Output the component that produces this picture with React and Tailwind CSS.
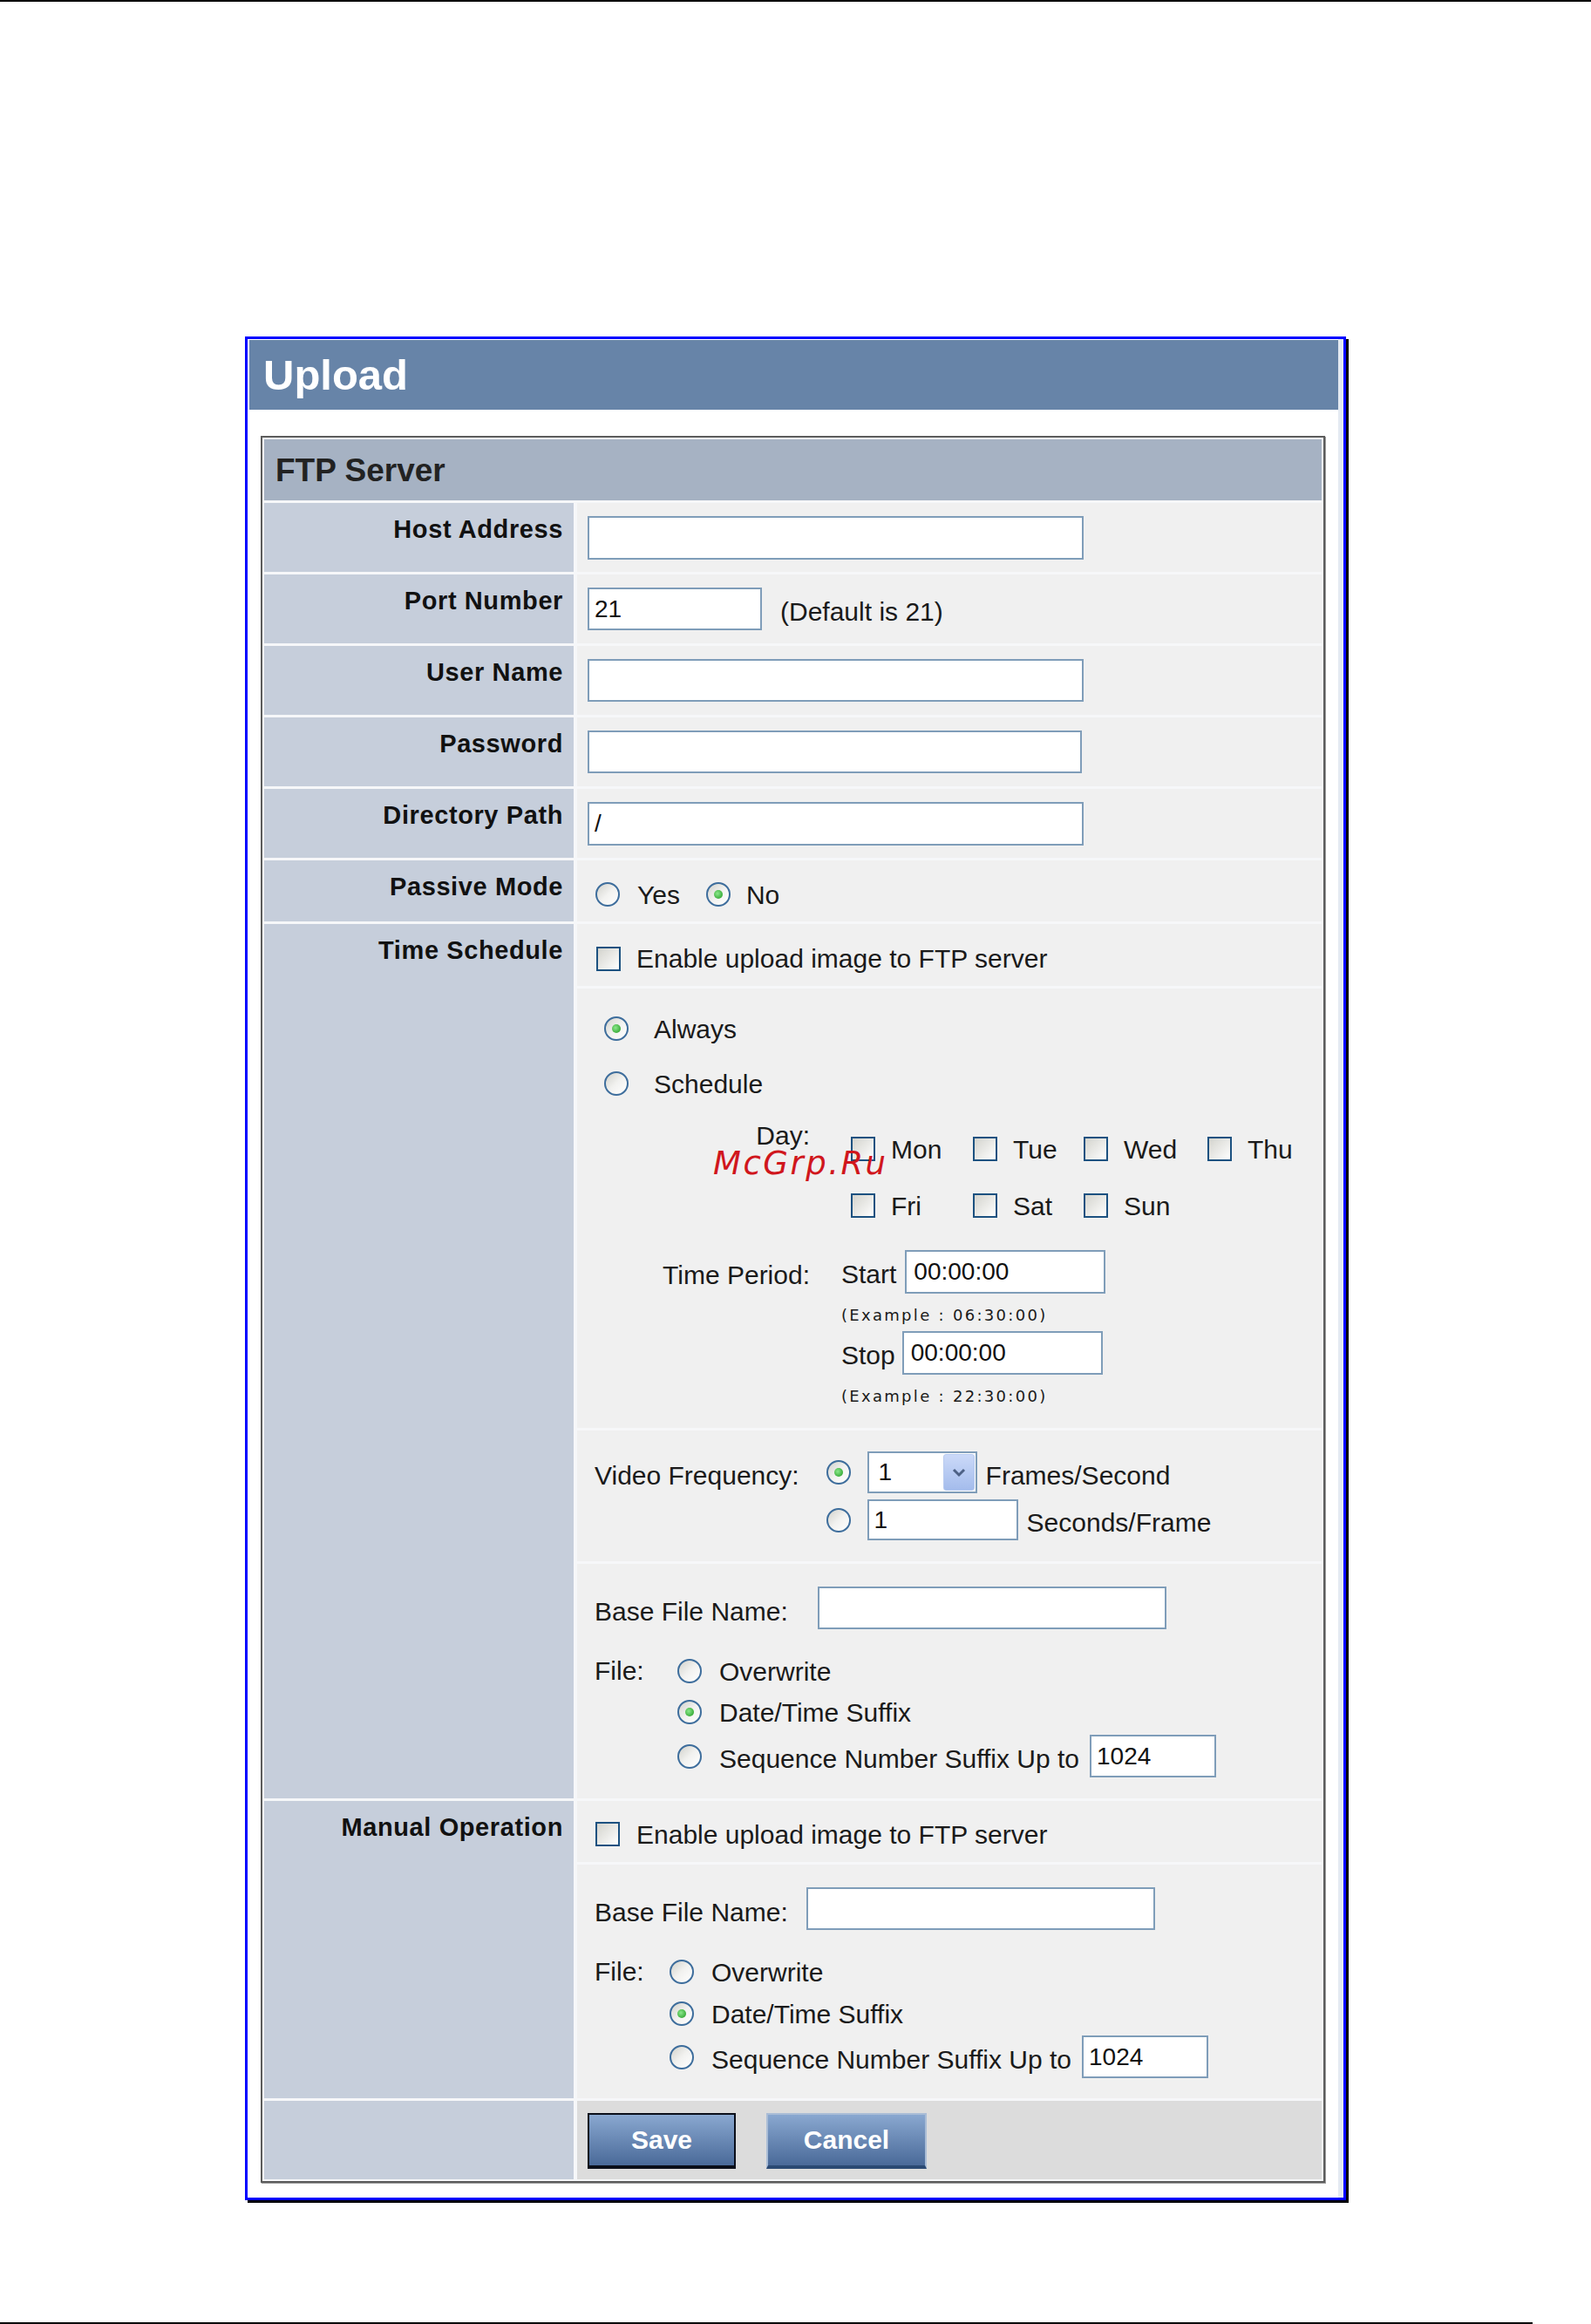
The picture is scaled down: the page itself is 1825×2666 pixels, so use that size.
import React from "react";

function Radio({ checked, className = "" }) {
  return (
    <span className={"inline-flex w-[28px] h-[28px] shrink-0 items-center justify-center rounded-full border-2 border-[#3d6d9c] bg-linear-to-br from-[#d2d2cc] via-[#f2f2f0] to-white " + className}>
      {checked && (
        <span className="w-[10px] h-[10px] rounded-full bg-[radial-gradient(circle_at_40%_40%,#8be88b,#1c961c)]" />
      )}
    </span>
  );
}

function Check() {
  return (
    <span className="inline-block w-[28px] h-[28px] shrink-0 border-2 border-[#1c5180] bg-linear-to-br from-[#d4d4ce] to-white" />
  );
}

function Field({ className, children }) {
  return (
    <div
      className={
        "border-2 border-[#7f9db9] bg-white text-[28px] leading-none text-[#111] flex items-center pl-[6px] " +
        className
      }
    >
      {children}
    </div>
  );
}

function Label({ children }) {
  return (
    <div className="bg-[#c6cedb] text-right pr-[12px] pt-[13px] text-[29px] font-bold tracking-[0.6px] leading-[34px] text-[#111]">
      {children}
    </div>
  );
}

function SimpleRow({ label, children, tall }) {
  return (
    <div className={"grid grid-cols-[355px_854px] gap-x-[4px] " + (tall ? "h-[79px]" : "h-[70px]")}>
      <Label>{label}</Label>
      <div className="bg-[#f0f0f0] pl-[12px] flex items-center">{children}</div>
    </div>
  );
}

function Example({ children }) {
  return (
    <div className="font-['DejaVu_Sans',sans-serif] text-[18px] tracking-[2.3px] leading-[24px] text-[#1a1a1a]">
      {children}
    </div>
  );
}

function DayCell({ label, className }) {
  return (
    <div className={"flex items-center h-[40px] " + className}>
      <Check />
      <span className="ml-[18px]">{label}</span>
    </div>
  );
}

export default function App() {
  return (
    <div className="relative h-[2666px] w-[1825px] bg-white flex flex-col font-['Liberation_Sans',Arial,sans-serif] text-[30px] text-[#1a1a1a]">
      <div className="h-[2px] w-full bg-black" />

      <div className="mt-[384px] ml-[281px] w-[1263px] border-[3px] border-[#0000ff] shadow-[3px_3px_0_#000] bg-white flex">
        <div className="flex flex-col pt-[1px] pl-[2px] pb-[17px] w-[1251px]">
          <div className="h-[80px] w-[1249px] bg-[#6784a8] flex items-center pl-[16px]">
            <span className="text-white font-bold text-[49px] leading-none">Upload</span>
          </div>

          <div className="mt-[30px] ml-[13px] w-[1221px] border-2 border-[#5c5c5c] shadow-[1px_1px_0_#9a9a9a] bg-[#f6f7f9] p-[2px] flex flex-col gap-[3px]">
            <div className="h-[70px] bg-[#a6b2c3] flex items-center pl-[13px]">
              <span className="font-bold text-[37px] text-[#222] leading-none">FTP Server</span>
            </div>

            <SimpleRow label="Host Address" tall>
              <Field className="w-[569px] h-[50px]" />
            </SimpleRow>
            <SimpleRow label="Port Number" tall>
              <Field className="w-[200px] h-[49px]">21</Field>
              <span className="ml-[21px] mt-[6px]">(Default is 21)</span>
            </SimpleRow>
            <SimpleRow label="User Name" tall>
              <Field className="w-[569px] h-[49px]" />
            </SimpleRow>
            <SimpleRow label="Password" tall>
              <Field className="w-[567px] h-[49px]" />
            </SimpleRow>
            <SimpleRow label="Directory Path" tall>
              <Field className="w-[569px] h-[50px]">/</Field>
            </SimpleRow>

            <div className="grid grid-cols-[355px_854px] gap-x-[4px] h-[70px]">
              <Label>Passive Mode</Label>
              <div className="bg-[#f0f0f0] pl-[21px] pt-[8px] flex items-center">
                <Radio />
                <span className="ml-[20px]">Yes</span>
                <Radio checked className="ml-[30px]" />
                <span className="ml-[18px]">No</span>
              </div>
            </div>

            {/* Time Schedule */}
            <div className="grid grid-cols-[355px_854px] gap-x-[4px]">
              <Label>Time Schedule</Label>
              <div className="flex flex-col gap-[3px]">
                <div className="h-[71px] bg-[#f0f0f0] pl-[22px] pt-[8px] flex items-center">
                  <Check />
                  <span className="ml-[18px]">Enable upload image to FTP server</span>
                </div>

                <div className="h-[504px] bg-[#f0f0f0] flex flex-col">
                  <div className="mt-[29px] h-[34px] pl-[31px] flex items-center">
                    <Radio checked />
                    <span className="ml-[29px]">Always</span>
                  </div>
                  <div className="mt-[29px] h-[34px] pl-[31px] flex items-center">
                    <Radio />
                    <span className="ml-[29px]">Schedule</span>
                  </div>

                  <div className="mt-[26px] flex items-start">
                    <div className="w-[267px] text-right leading-[34px]">Day:</div>
                    <div className="ml-[47px] pt-[12px] flex flex-col gap-[25px]">
                      <div className="flex">
                        <DayCell label="Mon" className="w-[140px]" />
                        <DayCell label="Tue" className="w-[127px]" />
                        <DayCell label="Wed" className="w-[142px]" />
                        <DayCell label="Thu" className="w-[120px]" />
                      </div>
                      <div className="flex">
                        <DayCell label="Fri" className="w-[140px]" />
                        <DayCell label="Sat" className="w-[127px]" />
                        <DayCell label="Sun" className="w-[142px]" />
                      </div>
                    </div>
                  </div>

                  <div className="mt-[31px] flex items-start">
                    <div className="w-[267px] text-right leading-[34px] pt-[12px]">Time Period:</div>
                    <div className="ml-[36px] flex flex-col">
                      <div className="flex items-center h-[50px]">
                        <span className="pt-[4px]">Start</span>
                        <Field className="ml-[10px] w-[230px] h-[50px] pl-[8px]">00:00:00</Field>
                      </div>
                      <div className="mt-[13px]">
                        <Example>(Example : 06:30:00)</Example>
                      </div>
                      <div className="mt-[6px] flex items-center h-[50px]">
                        <span className="pt-[4px]">Stop</span>
                        <Field className="ml-[8px] w-[230px] h-[50px] pl-[8px]">00:00:00</Field>
                      </div>
                      <div className="mt-[13px]">
                        <Example>(Example : 22:30:00)</Example>
                      </div>
                    </div>
                  </div>
                </div>

                <div className="h-[150px] bg-[#f0f0f0] pl-[20px] pt-[24px] flex items-start">
                  <div className="leading-[48px] pt-[4px]">Video Frequency:</div>
                  <div className="ml-[31px] flex flex-col gap-[7px]">
                    <div className="flex items-center h-[48px]">
                      <Radio checked />
                      <div className="ml-[19px] w-[126px] h-[48px] border-2 border-[#7f9db9] bg-white flex items-center justify-between">
                        <span className="pl-[11px] text-[28px] leading-none text-[#111]">1</span>
                        <span className="mr-[1px] w-[36px] h-[42px] rounded-[3px] bg-linear-to-b from-[#cbd9f8] to-[#a4bcec] border border-[#b8cbf0] flex items-center justify-center">
                          <svg width="18" height="14" viewBox="0 0 18 14">
                            <path d="M3 4 L9 10 L15 4" fill="none" stroke="#4d6185" strokeWidth="3" />
                          </svg>
                        </span>
                      </div>
                      <span className="ml-[10px] pt-[6px]">Frames/Second</span>
                    </div>
                    <div className="flex items-center h-[47px]">
                      <Radio />
                      <Field className="ml-[19px] w-[173px] h-[47px]">1</Field>
                      <span className="ml-[10px] pt-[6px]">Seconds/Frame</span>
                    </div>
                  </div>
                </div>

                <div className="h-[269px] bg-[#f0f0f0] pl-[20px] flex flex-col">
                  <div className="mt-[26px] flex items-center h-[49px]">
                    <span className="pt-[8px]">Base File Name:</span>
                    <Field className="ml-[34px] w-[400px] h-[49px]" />
                  </div>
                  <div className="mt-[31px] flex items-start">
                    <div className="w-[95px] leading-[34px]">File:</div>
                    <div className="flex flex-col">
                      <div className="h-[34px] flex items-center">
                        <Radio />
                        <span className="ml-[20px]">Overwrite</span>
                      </div>
                      <div className="mt-[13px] h-[34px] flex items-center">
                        <Radio checked />
                        <span className="ml-[20px]">Date/Time Suffix</span>
                      </div>
                      <div className="mt-[9px] h-[49px] flex items-center">
                        <Radio />
                        <span className="ml-[20px] pt-[6px]">Sequence Number Suffix Up to</span>
                        <Field className="ml-[12px] w-[145px] h-[49px]">1024</Field>
                      </div>
                    </div>
                  </div>
                </div>
              </div>
            </div>

            {/* Manual Operation */}
            <div className="grid grid-cols-[355px_854px] gap-x-[4px]">
              <Label>Manual Operation</Label>
              <div className="flex flex-col gap-[3px]">
                <div className="h-[70px] bg-[#f0f0f0] pl-[21px] pt-[6px] flex items-center">
                  <Check />
                  <span className="ml-[19px]">Enable upload image to FTP server</span>
                </div>
                <div className="h-[268px] bg-[#f0f0f0] pl-[20px] flex flex-col">
                  <div className="mt-[26px] flex items-center h-[49px]">
                    <span className="pt-[8px]">Base File Name:</span>
                    <Field className="ml-[21px] w-[400px] h-[49px]" />
                  </div>
                  <div className="mt-[31px] flex items-start">
                    <div className="w-[86px] leading-[34px]">File:</div>
                    <div className="flex flex-col">
                      <div className="h-[34px] flex items-center">
                        <Radio />
                        <span className="ml-[20px]">Overwrite</span>
                      </div>
                      <div className="mt-[14px] h-[34px] flex items-center">
                        <Radio checked />
                        <span className="ml-[20px]">Date/Time Suffix</span>
                      </div>
                      <div className="mt-[8px] h-[49px] flex items-center">
                        <Radio />
                        <span className="ml-[20px] pt-[6px]">Sequence Number Suffix Up to</span>
                        <Field className="ml-[12px] w-[145px] h-[49px]">1024</Field>
                      </div>
                    </div>
                  </div>
                </div>
              </div>
            </div>

            {/* Buttons */}
            <div className="grid grid-cols-[355px_854px] gap-x-[4px] h-[90px]">
              <div className="bg-[#c6cedb]" />
              <div className="bg-[#dcdcdc] pl-[12px] pt-[14px] flex items-start">
                <div className="w-[170px] h-[64px] border-2 border-[#0b0f1a] border-b-[4px] bg-linear-to-b from-[#8aa8d0] to-[#4a6a99] flex items-center justify-center">
                  <span className="text-white font-bold text-[30px] leading-none">Save</span>
                </div>
                <div className="ml-[35px] w-[184px] h-[64px] border-2 border-[#aabdd6] border-b-[4px] border-b-[#2b4a73] bg-linear-to-b from-[#8aa8d0] to-[#4a6a99] flex items-center justify-center">
                  <span className="text-white font-bold text-[30px] leading-none">Cancel</span>
                </div>
              </div>
            </div>
          </div>
        </div>
        <div className="w-[6px] bg-[#e4eaf2]" />
      </div>

      <div className="flex-1" />
      <div className="h-[2px] w-[1758px] bg-black" />

      <div className="absolute left-[818px] top-[1316px] font-['DejaVu_Sans',sans-serif] italic text-[37px] tracking-[2.5px] leading-none text-[#d0161c]">
        McGrp.Ru
      </div>
    </div>
  );
}
